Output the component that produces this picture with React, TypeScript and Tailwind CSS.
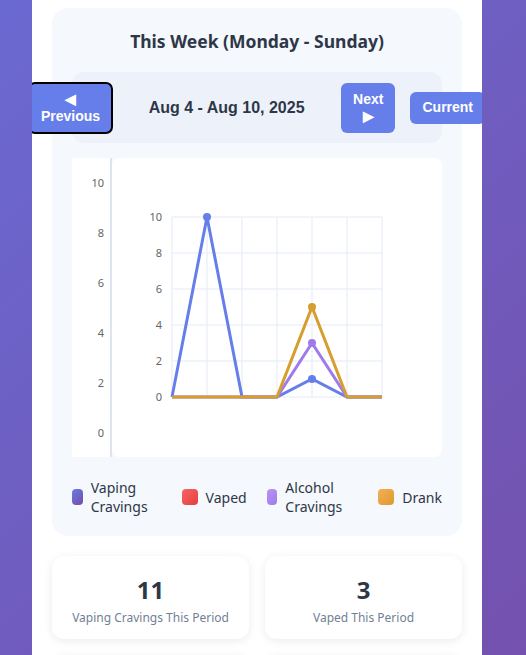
import React from 'react';

const days = [0, 1, 2, 3, 4, 5, 6];

const series = [
  { name: 'Vaping Cravings', color: '#667eea', data: [0, 10, 0, 0, 1, 0, 0] },
  { name: 'Alcohol Cravings', color: '#9f7aea', data: [0, 0, 0, 0, 3, 0, 0] },
  { name: 'Drank', color: '#d69e2e', data: [0, 0, 0, 0, 5, 0, 0] },
];

const legend = [
  { label: 'Vaping Cravings', swatch: 'bg-[linear-gradient(135deg,#667eea,#764ba2)]' },
  { label: 'Vaped', swatch: 'bg-[linear-gradient(135deg,#f56565,#e53e3e)]' },
  { label: 'Alcohol Cravings', swatch: 'bg-[linear-gradient(135deg,#b794f4,#9f7aea)]' },
  { label: 'Drank', swatch: 'bg-[linear-gradient(135deg,#f6ad55,#dd9b2e)]' },
];

const outerTicks = [10, 8, 6, 4, 2, 0];

function WeekChart() {
  const x0 = 60;
  const stepX = 35;
  const yTop = 59;
  const yBottom = 239;
  const toX = (i: number) => x0 + i * stepX;
  const toY = (v: number) => yBottom - (v / 10) * (yBottom - yTop);
  const ticks = [0, 2, 4, 6, 8, 10];

  return (
    <svg width="330" height="299" viewBox="0 0 330 299">
      {ticks.map((t) => (
        <g key={t}>
          <line x1={x0} x2={toX(6)} y1={toY(t)} y2={toY(t)} stroke="#edf1f8" strokeWidth="1.5" />
          <text
            x="50"
            y={toY(t) + 4}
            textAnchor="end"
            fontSize="11"
            fill="#666"
            fontFamily="'Noto Sans', sans-serif"
          >
            {t}
          </text>
        </g>
      ))}
      {days.map((d) => (
        <line key={d} x1={toX(d)} x2={toX(d)} y1={yTop} y2={yBottom} stroke="#edf1f8" strokeWidth="1.5" />
      ))}
      {series.map((s) => (
        <g key={s.name}>
          <polyline
            points={s.data.map((v, i) => `${toX(i)},${toY(v)}`).join(' ')}
            fill="none"
            stroke={s.color}
            strokeWidth="3"
            strokeLinejoin="miter"
          />
          {s.data.map((v, i) =>
            v > 0 ? <circle key={i} cx={toX(i)} cy={toY(v)} r="4" fill={s.color} /> : null
          )}
        </g>
      ))}
    </svg>
  );
}

export default function App() {
  return (
    <div className="w-[526px] h-[655px] overflow-hidden bg-[linear-gradient(135deg,#6a69d1,#7451ae)]">
      <div className="ml-[32px] w-[450px] h-full bg-white overflow-hidden px-5 pt-2 font-['Noto_Sans',sans-serif]">
        <div className="bg-[#f5f8fc] rounded-2xl p-5">
          <h3 className="text-center text-[17.5px] leading-[26px] font-bold text-[#2d3748]">
            This Week (Monday - Sunday)
          </h3>

          <div className="mt-[18px] h-[71px] bg-[#edf2fa] rounded-xl flex items-center justify-center gap-[15px] font-['Liberation_Sans',Arial,sans-serif]">
            <button className="shrink-0 bg-[#667eea] text-white text-sm font-bold leading-[17px] px-3 py-2 rounded-md outline-2 outline-black -outline-offset-1">
              ◀<br />Previous
            </button>
            <div className="shrink-0 w-[199px] text-center text-base font-bold text-[#2d3748]">
              Aug 4 - Aug 10, 2025
            </div>
            <button className="shrink-0 bg-[#667eea] text-white text-sm font-bold leading-[17px] px-3 py-2 rounded-md">
              Next<br />▶
            </button>
            <button className="shrink-0 bg-[#667eea] text-white text-sm font-bold leading-[17px] px-3 py-[7.5px] rounded-md">
              Current
            </button>
          </div>

          <div className="mt-[15px] h-[299px] flex">
            <div className="w-[40px] bg-white border-r-2 border-[#dde5f0] flex flex-col justify-between items-end pr-[6px] pt-[18px] pb-[17px] text-[11px] leading-[14px] text-[#666]">
              {outerTicks.map((t) => (
                <span key={t}>{t}</span>
              ))}
            </div>
            <div className="flex-1 bg-white rounded-lg overflow-hidden">
              <WeekChart />
            </div>
          </div>

          <div className="mt-[21px] flex gap-5 text-sm leading-[19px] text-[#2d3748]">
            {legend.map((l) => (
              <div key={l.label} className="flex items-center gap-2">
                <span className={`w-4 h-4 rounded-[4px] ${l.swatch}`} />
                <span>{l.label}</span>
              </div>
            ))}
          </div>
        </div>

        <div className="mt-[20px] grid grid-cols-2 gap-4">
          <div className="bg-white rounded-xl shadow-[0_2px_10px_rgba(0,0,0,0.08)] pt-5 pb-3 text-center">
            <div className="text-2xl leading-[28px] font-bold text-[#2d3748]">11</div>
            <div className="mt-[5px] text-xs leading-[18px] text-[#718096]">Vaping Cravings This Period</div>
          </div>
          <div className="bg-white rounded-xl shadow-[0_2px_10px_rgba(0,0,0,0.08)] pt-5 pb-3 text-center">
            <div className="text-2xl leading-[28px] font-bold text-[#2d3748]">3</div>
            <div className="mt-[5px] text-xs leading-[18px] text-[#718096]">Vaped This Period</div>
          </div>
          <div className="bg-white rounded-xl shadow-[0_2px_10px_rgba(0,0,0,0.08)] h-[80px]" />
          <div className="bg-white rounded-xl shadow-[0_2px_10px_rgba(0,0,0,0.08)] h-[80px]" />
        </div>
      </div>
    </div>
  );
}
